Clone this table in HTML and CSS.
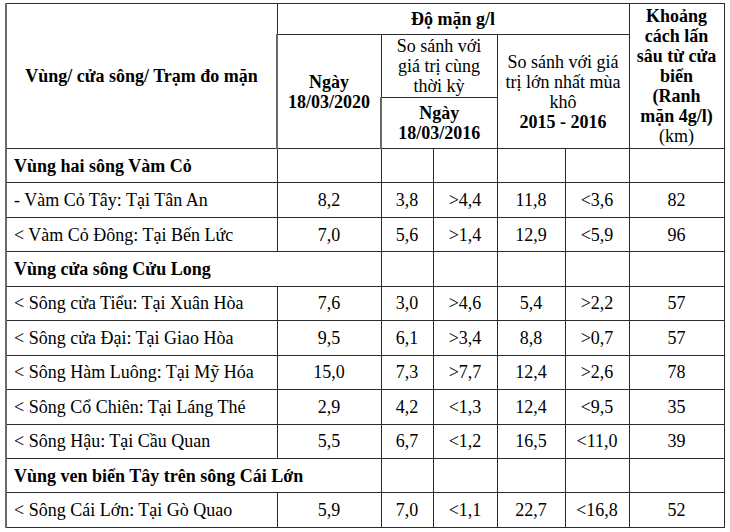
FILE: index.html
```html
<!DOCTYPE html>
<html lang="vi">
<head>
<meta charset="utf-8">
<title>Độ mặn</title>
<link rel="stylesheet" href="styles.css">
</head>
<body>
<div class="wrap">
<table class="salt">
  <colgroup>
    <col class="c-name">
    <col class="c-today">
    <col class="c-a">
    <col class="c-b">
    <col class="c-c">
    <col class="c-d">
    <col class="c-km">
  </colgroup>
  <thead>
    <tr class="h1">
      <th rowspan="3" class="bold">Vùng/ cửa sông/ Trạm đo mặn</th>
      <th colspan="5" class="bold">Độ mặn g/l</th>
      <th rowspan="3" class="bold km">Khoảng<br>cách lấn<br>sâu từ cửa<br>biển<br>(Ranh<br>mặn 4g/l)<br><span class="normal">(km)</span></th>
    </tr>
    <tr class="h2">
      <th rowspan="2" class="bold">Ngày<br>18/03/2020</th>
      <th colspan="2" class="normal">So sánh với<br>giá trị cùng<br>thời kỳ</th>
      <th colspan="2" rowspan="2" class="normal">So sánh với giá<br>trị lớn nhất mùa<br>khô<br><span class="bold">2015 - 2016</span></th>
    </tr>
    <tr class="h3">
      <th colspan="2" class="bold">Ngày<br>18/03/2016</th>
    </tr>
  </thead>
  <tbody>
    <tr class="group"><td class="name bold">Vùng hai sông Vàm Cỏ</td><td></td><td></td><td></td><td></td><td></td><td></td></tr>
    <tr><td class="name">- Vàm Cỏ Tây: Tại Tân An</td><td>8,2</td><td>3,8</td><td>&gt;4,4</td><td>11,8</td><td>&lt;3,6</td><td>82</td></tr>
    <tr><td class="name">&lt; Vàm Cỏ Đông: Tại Bến Lức</td><td>7,0</td><td>5,6</td><td>&gt;1,4</td><td>12,9</td><td>&lt;5,9</td><td>96</td></tr>
    <tr class="group"><td colspan="2" class="name bold">Vùng cửa sông Cửu Long</td><td></td><td></td><td></td><td></td><td></td></tr>
    <tr><td class="name">&lt; Sông cửa Tiểu: Tại Xuân Hòa</td><td>7,6</td><td>3,0</td><td>&gt;4,6</td><td>5,4</td><td>&gt;2,2</td><td>57</td></tr>
    <tr><td class="name">&lt; Sông cửa Đại: Tại Giao Hòa</td><td>9,5</td><td>6,1</td><td>&gt;3,4</td><td>8,8</td><td>&gt;0,7</td><td>57</td></tr>
    <tr><td class="name">&lt; Sông Hàm Luông: Tại Mỹ Hóa</td><td>15,0</td><td>7,3</td><td>&gt;7,7</td><td>12,4</td><td>&gt;2,6</td><td>78</td></tr>
    <tr><td class="name">&lt; Sông Cổ Chiên: Tại Láng Thé</td><td>2,9</td><td>4,2</td><td>&lt;1,3</td><td>12,4</td><td>&lt;9,5</td><td>35</td></tr>
    <tr><td class="name">&lt; Sông Hậu: Tại Cầu Quan</td><td>5,5</td><td>6,7</td><td>&lt;1,2</td><td>16,5</td><td>&lt;11,0</td><td>39</td></tr>
    <tr class="group"><td colspan="2" class="name bold">Vùng ven biển Tây trên sông Cái Lớn</td><td></td><td></td><td></td><td></td><td></td></tr>
    <tr><td class="name">&lt; Sông Cái Lớn: Tại Gò Quao</td><td>5,9</td><td>7,0</td><td>&lt;1,1</td><td>22,7</td><td>&lt;16,8</td><td>52</td></tr>
  </tbody>
</table>
</div>
</body>
</html>
```

FILE: styles.css
```css
html, body {
  margin: 0;
  padding: 0;
  background: #ffffff;
  font-family: "Liberation Serif", serif;
}

.wrap {
  padding: 3px 0 0 5px;
}

.salt {
  border-collapse: collapse;
  table-layout: fixed;
  width: 719px;
  font-family: "Liberation Serif", serif;
  font-size: 18px;
  line-height: 20px;
  color: #000;
}

.c-name { width: 271px; }
.c-today { width: 104px; }
.c-a { width: 52px; }
.c-b { width: 64px; }
.c-c { width: 68px; }
.c-d { width: 64px; }
.c-km { width: 95px; }

.salt th,
.salt td {
  font-family: "Liberation Serif", serif;
  border: 1px solid #2b2b2b;
  padding: 0;
  text-align: center;
  vertical-align: middle;
}

.salt th:first-child,
.salt td:first-child {
  border-left: 2px solid #6a6a6a;
}

.bold { font-weight: bold; }
.normal { font-weight: normal; }

.h1 { height: 31px; }
.h2 { height: 63px; }
.h3 { height: 51px; }

.salt tbody tr { height: 34.45px; }

.salt td.name {
  text-align: left;
  padding-left: 7px;
  white-space: nowrap;
}
```
